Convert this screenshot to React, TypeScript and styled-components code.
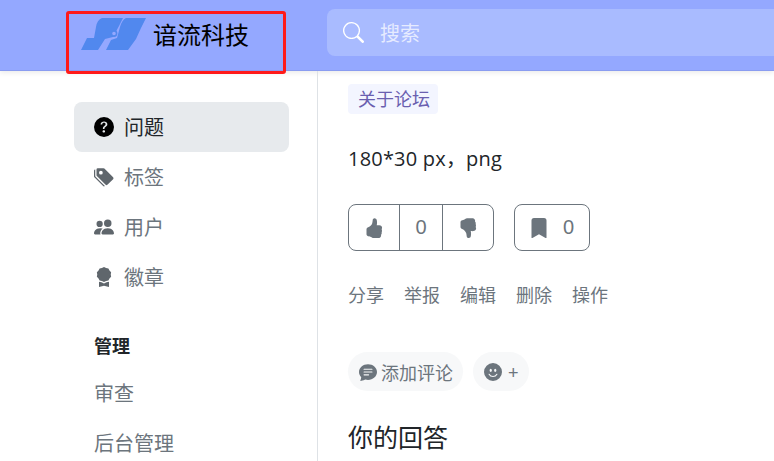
import { ReactNode } from "react";
import styled, { createGlobalStyle } from "styled-components";
import {
  BsAwardFill,
  BsBookmarkFill,
  BsChatTextFill,
  BsEmojiSmileFill,
  BsHandThumbsDownFill,
  BsHandThumbsUpFill,
  BsPeopleFill,
  BsQuestionCircleFill,
  BsSearch,
  BsTagsFill,
} from "react-icons/bs";

const GlobalStyle = createGlobalStyle`
  html, body {
    margin: 0;
    padding: 0;
    width: 774px;
    height: 461px;
    overflow: hidden;
    background: #fff;
    font-family: "Liberation Sans", "Noto Sans CJK SC", sans-serif;
    color: #212529;
  }
  * { box-sizing: border-box; }
`;

const Logo = () => (
  <svg width="66" height="34" viewBox="0 0 66 34" fill="#5188ee">
    <path d="M21 1H42L38 9L32 20L24 22L17 33H0L6 21H13L15 10Q16 3 21 1Z" />
    <path d="M45 1H65L60 11L55 22L47 33H25L30 23L36 21L39 10Q41 3 45 1Z" />
    <circle cx="33" cy="16.5" r="2.6" fill="#94a8ff" stroke="#5188ee" strokeWidth="1.6" />
  </svg>
);

const navItems: { label: string; icon: ReactNode; active?: boolean }[] = [
  { label: "问题", icon: <BsQuestionCircleFill />, active: true },
  { label: "标签", icon: <BsTagsFill /> },
  { label: "用户", icon: <BsPeopleFill /> },
  { label: "徽章", icon: <BsAwardFill /> },
];

const actions = ["分享", "举报", "编辑", "删除", "操作"];

const App = () => {
  return (
    <Page>
      <GlobalStyle />
      <Header>
        <Brand>
          <Logo />
          <BrandName>谙流科技</BrandName>
        </Brand>
        <SearchBox>
          <BsSearch size={21} />
          <SearchText>搜索</SearchText>
        </SearchBox>
      </Header>
      <RedFrame />
      <Body>
        <Sidebar>
          <NavList>
            {navItems.map((item) => (
              <NavItem key={item.label} $active={item.active}>
                <NavIcon>{item.icon}</NavIcon>
                <NavLabel>{item.label}</NavLabel>
              </NavItem>
            ))}
          </NavList>
          <SectionTitle>管理</SectionTitle>
          <PlainItem>审查</PlainItem>
          <PlainItem>后台管理</PlainItem>
        </Sidebar>
        <Content>
          <TagChip>关于论坛</TagChip>
          <Question>180*30 px，png</Question>
          <VoteRow>
            <BtnGroup>
              <GroupCell $width={50}>
                <BsHandThumbsUpFill size={20} />
              </GroupCell>
              <GroupCell $width={43}>0</GroupCell>
              <GroupCell $width={51}>
                <BsHandThumbsDownFill size={20} />
              </GroupCell>
            </BtnGroup>
            <BookmarkBtn>
              <BsBookmarkFill size={20} />
              <span>0</span>
            </BookmarkBtn>
          </VoteRow>
          <ActionRow>
            {actions.map((a) => (
              <ActionLink key={a}>{a}</ActionLink>
            ))}
          </ActionRow>
          <CommentRow>
            <Pill>
              <BsChatTextFill size={18} />
              添加评论
            </Pill>
            <EmojiPill>
              <BsEmojiSmileFill size={18} />
              <PlusMark>+</PlusMark>
            </EmojiPill>
          </CommentRow>
          <AnswerTitle>你的回答</AnswerTitle>
        </Content>
      </Body>
    </Page>
  );
};

export default App;

const Page = styled.div`
  position: relative;
  width: 774px;
  height: 461px;
  overflow: hidden;
`;

const Header = styled.header`
  display: flex;
  align-items: flex-start;
  height: 71px;
  padding: 9px 0 0 81px;
  background-color: #94a8ff;
  border-bottom: 1px solid #8a9cf0;
  box-shadow: 0 2px 5px rgba(0, 0, 0, 0.08);
`;

const Brand = styled.div`
  display: flex;
  align-items: center;
  gap: 6px;
  width: 246px;
  height: 50px;
`;

const BrandName = styled.span`
  font-size: 24px;
  line-height: 32px;
  color: #000;
  font-family: "Noto Sans CJK SC", sans-serif;
`;

const RedFrame = styled.div`
  position: absolute;
  left: 66px;
  top: 11px;
  width: 220px;
  height: 63px;
  border: 3px solid #ff1a1a;
  border-radius: 3px;
`;

const SearchBox = styled.div`
  display: flex;
  align-items: center;
  gap: 16px;
  flex: 1;
  height: 47px;
  padding-left: 16px;
  border-radius: 8px 0 0 8px;
  background-color: #a9bbff;
  color: #fff;
`;

const SearchText = styled.span`
  font-size: 20px;
  color: rgba(255, 255, 255, 0.72);
  font-family: "Noto Sans CJK SC", sans-serif;
`;

const Body = styled.div`
  display: flex;
  height: 390px;
`;

const Sidebar = styled.aside`
  width: 318px;
  padding: 31px 28px 0 74px;
  border-right: 1px solid #dee2e6;
  font-family: "Noto Sans CJK SC", sans-serif;
`;

const NavList = styled.nav`
  display: flex;
  flex-direction: column;
`;

const NavItem = styled.a<{ $active?: boolean }>`
  display: flex;
  align-items: center;
  gap: 10px;
  height: 50px;
  padding-left: 20px;
  border-radius: 8px;
  font-size: 20px;
  color: ${(p) => (p.$active ? "#212529" : "#6c757d")};
  background-color: ${(p) => (p.$active ? "#e7eaed" : "transparent")};

  svg {
    color: ${(p) => (p.$active ? "#000" : "#5f666c")};
  }
`;

const NavIcon = styled.span`
  display: flex;
  align-items: center;
  font-size: 20px;
`;

const NavLabel = styled.span`
  padding-bottom: 2px;
`;

const SectionTitle = styled.div`
  padding: 30px 0 0 20px;
  font-size: 18px;
  line-height: 27px;
  font-weight: 700;
  color: #212529;
`;

const PlainItem = styled.a`
  display: flex;
  align-items: center;
  height: 50px;
  padding-left: 20px;
  font-size: 20px;
  color: #6c757d;

  ${SectionTitle} + & {
    margin-top: 8px;
  }
`;

const Content = styled.main`
  flex: 1;
  padding: 13px 0 0 30px;
`;

const TagChip = styled.div`
  display: inline-flex;
  align-items: center;
  height: 30px;
  padding: 0 8px 2px 10px;
  border-radius: 4px;
  background-color: #f3f5ff;
  color: #6a5fb0;
  font-size: 18px;
`;

const Question = styled.p`
  margin: 30px 0 0;
  font-family: "Open Sans", "Noto Sans CJK SC", sans-serif;
  font-size: 20px;
  line-height: 30px;
  letter-spacing: 0.2px;
  color: #212529;
`;

const VoteRow = styled.div`
  display: flex;
  gap: 20px;
  margin-top: 30px;
`;

const BtnGroup = styled.div`
  display: flex;
  height: 47px;
  border: 1px solid #6c757d;
  border-radius: 8px;
  color: #6c757d;
  font-size: 20px;
`;

const GroupCell = styled.div<{ $width: number }>`
  display: flex;
  align-items: center;
  justify-content: center;
  width: ${(p) => p.$width}px;

  & + & {
    border-left: 1px solid #6c757d;
  }
`;

const BookmarkBtn = styled.div`
  display: flex;
  align-items: center;
  gap: 14px;
  width: 76px;
  height: 47px;
  padding-left: 14px;
  border: 1px solid #6c757d;
  border-radius: 8px;
  color: #6c757d;
  font-size: 20px;
`;

const ActionRow = styled.div`
  display: flex;
  gap: 20px;
  margin-top: 32px;
`;

const ActionLink = styled.a`
  font-size: 18px;
  line-height: 27px;
  color: #6c757d;
`;

const CommentRow = styled.div`
  display: flex;
  gap: 10px;
  margin-top: 42px;
`;

const Pill = styled.div`
  display: flex;
  align-items: center;
  gap: 4px;
  height: 39px;
  padding: 0 10px 0 11px;
  border-radius: 20px;
  background-color: #f7f8f9;
  color: #6c757d;
  font-size: 18px;
`;

const EmojiPill = styled(Pill)`
  gap: 6px;
`;

const PlusMark = styled.span`
  padding-top: 3px;
`;

const AnswerTitle = styled.h2`
  margin: 29px 0 0;
  font-size: 25px;
  line-height: 36px;
  font-weight: 400;
  color: #212529;
`;
